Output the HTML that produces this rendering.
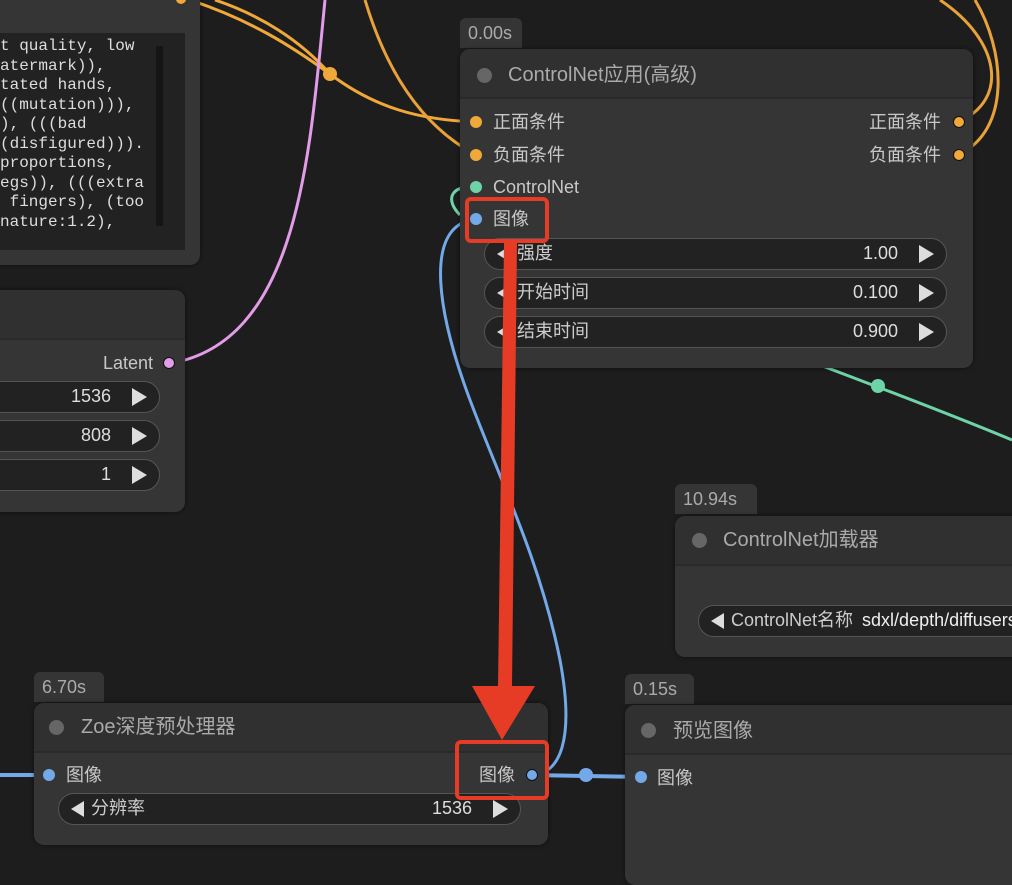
<!DOCTYPE html>
<html><head><meta charset="utf-8"><style>
*{margin:0;padding:0;box-sizing:border-box}
body{width:1012px;height:870px;background:#1d1d1d;overflow:hidden;position:relative;font-family:"Liberation Sans","Noto Sans CJK SC",sans-serif;color:#bfbfbf}
.n{position:absolute;background:#353535;border-radius:10px;box-shadow:0 0 4px rgba(0,0,0,.5)}
.tb{position:absolute;left:0;right:0;top:0;background:#303030;border-bottom:2px solid #2a2a2a;border-radius:10px 10px 0 0}
.t{position:absolute;font-size:20px;color:#aaa;line-height:24px}
.d{position:absolute;width:12px;height:12px;border-radius:50%}
.badge{position:absolute;background:#353535;border-radius:6px 6px 0 0;color:#aaa;font-size:18px;padding:4px 8px;line-height:22px}
.w{position:absolute;background:#222;border:1.5px solid #555;border-radius:16px;height:32px;font-size:18px;color:#ddd;line-height:29px}
.w .l{position:absolute;left:32px;top:0;color:#ccc}
.w .v{position:absolute;right:48px;top:0}
.w .ar{position:absolute;right:12px;top:6px;width:0;height:0;border-left:15px solid #ddd;border-top:9px solid transparent;border-bottom:9px solid transparent}
.w .al{position:absolute;left:12px;top:7px;width:0;height:0;border-right:13px solid #ddd;border-top:8px solid transparent;border-bottom:8px solid transparent}
.lab{position:absolute;font-size:18px;color:#c8c8c8;line-height:22px}
.mono{font-family:"Liberation Mono","DejaVu Sans Mono",monospace;font-size:16px;color:#ddd;line-height:19.5px;white-space:pre}
</style></head><body>
<svg style="position:absolute;left:0;top:0" width="1012" height="870">
<g fill="none" stroke-width="3">
<path d="M190 0 C250 20 290 45 330 74 C375 108 420 120 476 122" stroke="#f0a83a"/>
<path d="M215 0 C260 15 300 40 330 74" stroke="#f0a83a"/>
<path d="M365 0 C380 50 410 120 476 155" stroke="#e9a23a" />
<path d="M958 122 C1010 100 1000 40 940 0" stroke="#e9a23a"/>
<path d="M958 155 C1012 130 1005 50 975 0" stroke="#e9a23a"/>
<path d="M325 0 C310 150 300 340 172 363" stroke="#e39ce8"/>
<path d="M476 187 C450 185 445 200 460 215" stroke="#6fd3a8"/>
<path d="M820 365 C880 388 940 410 1012 440" stroke="#6fd3a8"/>
<path d="M476 219 C420 225 440 320 470 400 C500 480 540 560 560 660 C575 740 560 775 531 775" stroke="#73a9e8"/>
<path d="M531 775 L640 777" stroke="#73a9e8" stroke-width="4"/>
<path d="M0 775 L49 775" stroke="#73a9e8" stroke-width="4"/>
</g>
<circle cx="330" cy="74" r="7" fill="#f0a83a"/>
<circle cx="878" cy="386" r="7" fill="#6fd3a8"/>
<circle cx="586" cy="775" r="7" fill="#73a9e8"/>
</svg>

<div class="n" style="left:-20px;top:-20px;width:220px;height:285px">
<div class="d" style="left:196px;top:14px;background:#f0a83a;width:10px;height:10px"></div>
<div style="position:absolute;left:20px;top:53px;width:185px;height:217px;background:#222">
<div class="mono" style="position:absolute;left:0;top:4px">t quality, low
atermark)),
tated hands,
((mutation))),
), (((bad
(disfigured))).
proportions,
egs)), (((extra
 fingers), (too
nature:1.2),</div>
<div style="position:absolute;left:156px;top:13px;width:7px;height:180px;background:#151515"></div>
</div></div>

<div class="n" style="left:-20px;top:290px;width:205px;height:222px">
<div class="tb" style="height:50px"></div>
<div class="lab" style="right:32px;top:62px">Latent</div>
<div class="d" style="left:183px;top:67px;background:#e39ce8;border:1px solid #111"></div>
<div class="w" style="left:0;width:180px;top:91px"><span class="v">1536</span><span class="ar"></span></div>
<div class="w" style="left:0;width:180px;top:130px"><span class="v">808</span><span class="ar"></span></div>
<div class="w" style="left:0;width:180px;top:169px"><span class="v">1</span><span class="ar"></span></div>
</div>

<div class="badge" style="left:460px;top:18px;height:30px;width:62px">0.00s</div>
<div class="n" style="left:460px;top:49px;width:513px;height:319px">
<div class="tb" style="height:50px"></div>
<div class="d" style="left:17px;top:19px;background:#666;width:15px;height:15px"></div>
<div class="t" style="left:48px;top:14px">ControlNet应用(高级)</div>
<div class="d" style="left:10px;top:67px;background:#f0a83a"></div><div class="lab" style="left:33px;top:62px">正面条件</div>
<div class="d" style="left:10px;top:100px;background:#f0a83a"></div><div class="lab" style="left:33px;top:95px">负面条件</div>
<div class="d" style="left:10px;top:132px;background:#6fd3a8"></div><div class="lab" style="left:33px;top:127px">ControlNet</div>
<div class="d" style="left:10px;top:164px;background:#73a9e8"></div><div class="lab" style="left:33px;top:159px">图像</div>
<div class="lab" style="right:32px;top:62px">正面条件</div><div class="d" style="right:8px;top:67px;background:#f0a83a;border:1px solid #111"></div>
<div class="lab" style="right:32px;top:95px">负面条件</div><div class="d" style="right:8px;top:100px;background:#f0a83a;border:1px solid #111"></div>
<div class="w" style="left:24px;width:463px;top:189px"><span class="al"></span><span class="l">强度</span><span class="v">1.00</span><span class="ar"></span></div>
<div class="w" style="left:24px;width:463px;top:228px"><span class="al"></span><span class="l">开始时间</span><span class="v">0.100</span><span class="ar"></span></div>
<div class="w" style="left:24px;width:463px;top:267px"><span class="al"></span><span class="l">结束时间</span><span class="v">0.900</span><span class="ar"></span></div>
</div>

<div class="badge" style="left:675px;top:484px;height:30px;width:82px">10.94s</div>
<div class="n" style="left:675px;top:516px;width:360px;height:141px">
<div class="tb" style="height:50px"></div>
<div class="d" style="left:17px;top:17px;background:#666;width:15px;height:15px"></div>
<div class="t" style="left:48px;top:12px">ControlNet加载器</div>
<div class="w" style="left:23px;width:340px;top:89px"><span class="al"></span><span class="l" style="left:32px">ControlNet名称 <b style="color:#eee;font-weight:normal;margin-left:4px">sdxl/depth/diffusers</b></span></div>
</div>

<div class="badge" style="left:34px;top:672px;height:30px;width:70px">6.70s</div>
<div class="n" style="left:34px;top:703px;width:514px;height:142px">
<div class="tb" style="height:50px"></div>
<div class="d" style="left:15px;top:17px;background:#666;width:15px;height:15px"></div>
<div class="t" style="left:47px;top:12px">Zoe深度预处理器</div>
<div class="d" style="left:9px;top:66px;background:#73a9e8"></div><div class="lab" style="left:32px;top:61px">图像</div>
<div class="lab" style="right:33px;top:61px">图像</div><div class="d" style="right:10px;top:66px;background:#73a9e8;border:1.5px solid #111"></div>
<div class="w" style="left:24px;width:463px;top:90px"><span class="al"></span><span class="l">分辨率</span><span class="v">1536</span><span class="ar"></span></div>
</div>

<div class="badge" style="left:625px;top:674px;height:30px;width:69px">0.15s</div>
<div class="n" style="left:625px;top:705px;width:400px;height:180px">
<div class="tb" style="height:50px"></div>
<div class="d" style="left:16px;top:18px;background:#666;width:15px;height:15px"></div>
<div class="t" style="left:48px;top:14px">预览图像</div>
<div class="d" style="left:10px;top:66px;background:#73a9e8"></div><div class="lab" style="left:32px;top:62px">图像</div>
</div>

<div style="position:absolute;left:465px;top:197px;width:84px;height:46px;border:4px solid #e63b25;border-radius:6px"></div>
<div style="position:absolute;left:455px;top:740px;width:94px;height:60px;border:4px solid #e63b25;border-radius:6px"></div>
<svg style="position:absolute;left:0;top:0" width="1012" height="870">
<polygon points="504,243 517,243 512,686 535,686 502,740 472,686 498,686" fill="#e63b25"/>
</svg>
</body></html>
